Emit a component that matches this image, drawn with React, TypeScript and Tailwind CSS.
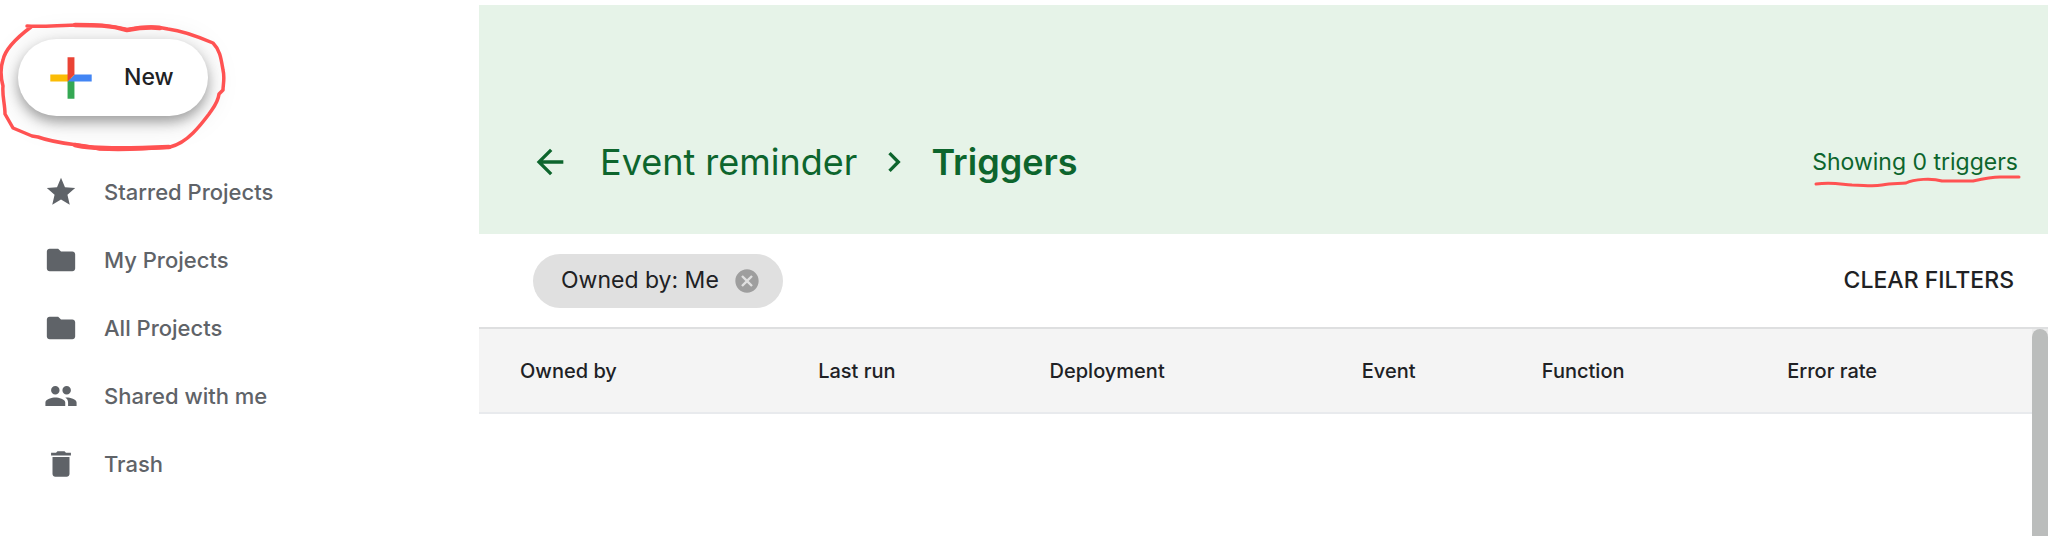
import type { IconType } from "react-icons";
import {
  MdArrowBack,
  MdCancel,
  MdChevronRight,
  MdDelete,
  MdFolder,
  MdPeople,
  MdStar,
} from "react-icons/md";

const navItems: { label: string; icon: IconType }[] = [
  { label: "Starred Projects", icon: MdStar },
  { label: "My Projects", icon: MdFolder },
  { label: "All Projects", icon: MdFolder },
  { label: "Shared with me", icon: MdPeople },
  { label: "Trash", icon: MdDelete },
];

const columns = [
  { label: "Owned by", width: "w-[19.2%]" },
  { label: "Last run", width: "w-[14.9%]" },
  { label: "Deployment", width: "w-[20.1%]" },
  { label: "Event", width: "w-[11.6%]" },
  { label: "Function", width: "w-[15.8%]" },
  { label: "Error rate", width: "w-[18.4%]" },
];

function PlusIcon() {
  return (
    <svg viewBox="0 0 36 36" className="size-[62px]" aria-hidden="true">
      <path fill="#34A853" d="M16 16v14h4V20z" />
      <path fill="#4285F4" d="M30 16H20l-4 4h14z" />
      <path fill="#FBBC05" d="M6 16v4h10l4-4z" />
      <path fill="#EA4335" d="M20 16V6h-4v14z" />
    </svg>
  );
}

// Hand-drawn ring round the New button
function RingMark() {
  return (
    <svg
      viewBox="0 0 240 160"
      fill="none"
      stroke="#ff5252"
      strokeLinecap="round"
      strokeLinejoin="round"
      className="pointer-events-none absolute top-0 left-0 h-40 w-60"
      aria-hidden="true"
    >
      <path
        strokeWidth="3.5"
        d="M27 26C45 27 60 25 80 25C96 25 112 25 127 30C140 27 155 26 168 29C184 31 199 37 213 43C220 50 221 58 223 70C225 78 223 85 223 90L219 94C218 103 213 108 209 114C203 122 198 128 193 133C187 139 178 145 170 147C146 149 120 150 100 149C82 144 60 145 38 137L32 136L13 128L5 114C5 104 2 96 3 86C0 75 1 66 3 60C5 50 15 39 31 27"
      />
      <path strokeWidth="4.5" d="M75 25C95 25 110 25 127 30C138 28 150 27 160 28" />
      <path strokeWidth="4.5" d="M75 145C90 149 125 149 169 147" />
    </svg>
  );
}

function UnderlineMark() {
  return (
    <svg
      viewBox="0 0 210 16"
      fill="none"
      stroke="#ff5252"
      strokeWidth="3"
      strokeLinecap="round"
      strokeLinejoin="round"
      className="pointer-events-none absolute top-7 left-0 h-4 w-[210px]"
      aria-hidden="true"
    >
      <path d="M4 10C20 8 27 10 40 11C52 11 60 13 70 11C80 9 88 10 94 9C102 5 120 4 130 7H161C170 5 180 3 188 3H207" />
    </svg>
  );
}

function Sidebar() {
  return (
    <aside className="relative w-[479px] shrink-0 pt-[39px]">
      <button
        type="button"
        className="ml-[18px] flex h-[77px] w-[190px] items-center gap-[22px] rounded-full bg-white pl-[22px] text-[23px] font-medium text-[#202124] shadow-[0_6px_12px_rgba(0,0,0,0.3),0_4px_32px_rgba(0,0,0,0.15)]"
      >
        <PlusIcon />
        New
      </button>
      <RingMark />
      <nav className="mt-[42px]">
        <ul>
          {navItems.map(({ label, icon: Icon }) => (
            <li key={label}>
              <a
                href="#"
                className="flex h-[68px] items-center gap-[26px] pl-11 text-[22px] font-medium text-[#5f6368]"
              >
                <Icon className="size-[34px]" />
                {label}
              </a>
            </li>
          ))}
        </ul>
      </nav>
    </aside>
  );
}

function Header() {
  return (
    <header className="flex h-[229px] items-end justify-between bg-[#e6f3e8] pr-[30px] pb-12 pl-[51px] text-[#0d652d]">
      <div className="flex items-center text-4xl">
        <button type="button" aria-label="Back">
          <MdArrowBack className="size-10" />
        </button>
        <a href="#" className="ml-[30px] leading-12">
          Event reminder
        </a>
        <MdChevronRight className="mx-[17px] size-10" />
        <h1 className="leading-12 font-semibold">Triggers</h1>
      </div>
      <div className="relative mb-2">
        <p className="text-[23px] leading-8">Showing 0 triggers</p>
        <UnderlineMark />
      </div>
    </header>
  );
}

function Filters() {
  return (
    <div className="flex h-[93px] items-center justify-between pr-[34px] pl-[54px] text-[23px] text-[#202124]">
      <div className="flex h-[54px] items-center gap-[14px] rounded-full bg-[#e0e0e0] pr-[22px] pl-7">
        Owned by: Me
        <button type="button" aria-label="Remove filter">
          <MdCancel className="size-7 text-[#9e9e9e]" />
        </button>
      </div>
      <button type="button" className="font-medium">
        CLEAR FILTERS
      </button>
    </div>
  );
}

export default function App() {
  return (
    <div className="flex min-h-screen bg-white font-['Inter','Liberation_Sans',sans-serif]">
      <Sidebar />
      <main className="flex min-w-0 flex-1 flex-col pt-[5px]">
        <Header />
        <Filters />
        <div className="flex flex-1 items-stretch border-t-2 border-[#dedfe0]">
          <div className="flex-1">
            <table className="w-full table-fixed text-left text-xl text-[#202124]">
              <thead>
                <tr className="h-[84px] border-b-2 border-[#e8eaed] bg-[#f4f4f4]">
                  {columns.map((col) => (
                    <th key={col.label} className={`${col.width} pl-[41px] font-medium`}>
                      {col.label}
                    </th>
                  ))}
                </tr>
              </thead>
            </table>
          </div>
          <div className="flex w-4 bg-[#ececec]">
            <div className="w-4 rounded-t-lg bg-[#bbbdbc]" />
          </div>
        </div>
      </main>
    </div>
  );
}
